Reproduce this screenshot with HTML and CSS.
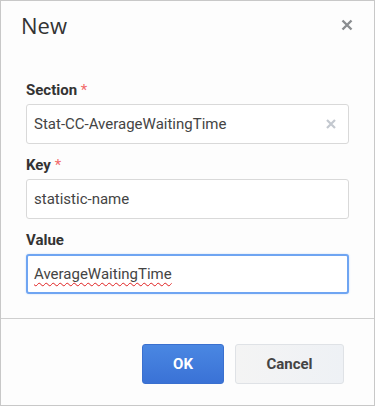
FILE: index.html
```html
<!DOCTYPE html>
<html>
<head>
<meta charset="utf-8">
<link rel="stylesheet" href="styles.css">
</head>
<body>
<div class="dialog">
  <div class="header">
    <h1 class="title">New</h1>
    <button class="close" aria-label="Close">
      <svg width="12" height="12" viewBox="0 0 12 12"><path d="M1.5 1.5 L10.5 10.5 M10.5 1.5 L1.5 10.5" stroke="#8a8d90" stroke-width="2.4" stroke-linecap="butt"/></svg>
    </button>
  </div>
  <div class="body">
    <div class="group">
      <label class="label">Section <span class="req">*</span></label>
      <div class="field">
        <span class="value">Stat-CC-AverageWaitingTime</span>
        <span class="clear">
          <svg width="10" height="10" viewBox="0 0 10 10"><path d="M1 1 L9 9 M9 1 L1 9" stroke="#c3c8cf" stroke-width="2.2"/></svg>
        </span>
      </div>
    </div>
    <div class="group">
      <label class="label">Key <span class="req">*</span></label>
      <div class="field">
        <span class="value">statistic-name</span>
      </div>
    </div>
    <div class="group">
      <label class="label">Value</label>
      <div class="field focus">
        <span class="value spell">AverageWaitingTime</span>
      </div>
    </div>
  </div>
  <div class="footer">
    <button class="btn ok">OK</button>
    <button class="btn cancel">Cancel</button>
  </div>
</div>
</body>
</html>
```
FILE: styles.css
```css
* { box-sizing: border-box; }
html, body { margin: 0; padding: 0; background: #fff; }
body { font-family: Roboto, "Liberation Sans", sans-serif; }

.dialog {
  width: 375px;
  height: 406px;
  border: 1px solid #c8c8c8;
  background: #fdfdfd;
  display: flex;
  flex-direction: column;
}

.header {
  display: flex;
  align-items: center;
  justify-content: space-between;
  padding: 0 21px 0 20px;
  height: 47px;
}
.title {
  margin: 0;
  font-family: "Open Sans", "Noto Sans", sans-serif;
  font-weight: 400;
  font-size: 22px;
  line-height: 30px;
  color: #333;
}
.close {
  border: 0;
  background: none;
  padding: 0;
  width: 12px;
  height: 12px;
  display: block;
}
.close svg { display: block; }

.body {
  padding: 32px 25px 0 25px;
  flex: 1;
}
.group { margin-bottom: 11px; }
.label {
  display: block;
  font-weight: 700;
  font-size: 15px;
  line-height: 20px;
  color: #333;
  margin-bottom: 4px;
}
.req { color: #f26a6a; font-weight: 400; }

.field {
  height: 40px;
  width: 323px;
  border: 1px solid #d9d9d9;
  border-radius: 3px;
  background: #fff;
  display: flex;
  align-items: center;
  padding: 0 12px 0 7px;
  justify-content: space-between;
}
.field.focus {
  border: 2px solid #6fa5f2;
  padding-left: 6px;
  box-shadow: 0 0 2px rgba(111,165,242,0.4);
}
.value {
  font-size: 15px;
  color: #444;
}
.spell {
  text-decoration: underline wavy #e02020;
  text-decoration-thickness: 1px;
  text-underline-offset: 3px;
}
.clear { display: block; width: 10px; height: 10px; }
.clear svg { display: block; }

.footer {
  border-top: 1px solid #cfcfcf;
  height: 87px;
  display: flex;
  justify-content: flex-end;
  align-items: flex-start;
  gap: 11px;
  padding: 25px 30px 0 0;
}
.btn {
  height: 40px;
  border-radius: 3px;
  font-family: Roboto, "Liberation Sans", sans-serif;
  font-weight: 700;
  font-size: 15px;
  padding: 0;
}
.ok {
  width: 82px;
  color: #fff;
  background: linear-gradient(#4a87e2, #3a72d6);
  border: 1px solid #3a70cf;
}
.cancel {
  width: 109px;
  color: #444;
  background: linear-gradient(90deg, #f4f4f4, #eef1f5);
  border: 1px solid #dfe2e6;
}
```
